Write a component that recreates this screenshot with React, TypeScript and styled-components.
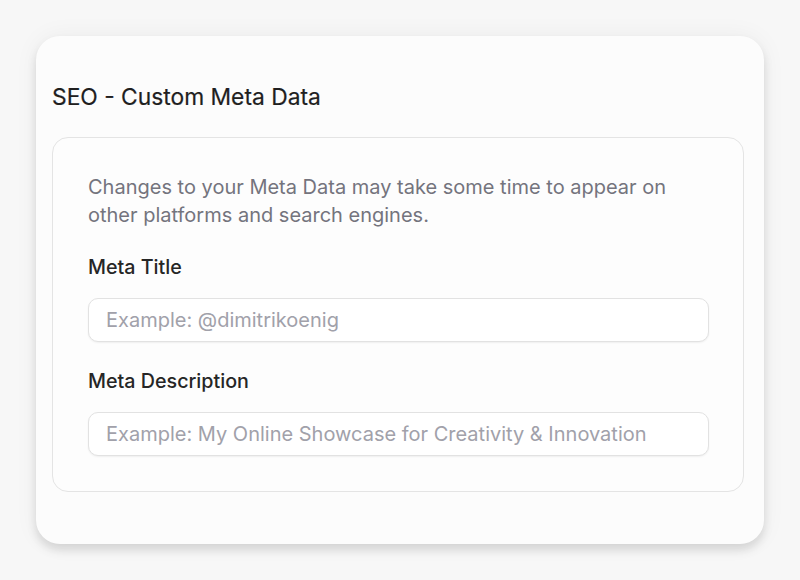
import React from 'react';
import styled, { createGlobalStyle } from 'styled-components';

const GlobalStyle = createGlobalStyle`
	html, body {
		margin: 0;
		padding: 0;
		background: #f7f7f7;
		font-family: Inter, 'Noto Sans', sans-serif;
	}
`;

export default function App() {
	return (
		<>
			<GlobalStyle />
			<Page>
				<Card>
					<Heading>SEO - Custom Meta Data</Heading>
					<Panel>
						<Note>
							Changes to your Meta Data may take some time to appear on other platforms and search engines.
						</Note>
						<Field>
							<Label htmlFor="meta-title">Meta Title</Label>
							<Input id="meta-title" placeholder="Example: @dimitrikoenig" />
						</Field>
						<Field>
							<Label htmlFor="meta-desc">Meta Description</Label>
							<Input id="meta-desc" placeholder="Example: My Online Showcase for Creativity & Innovation" />
						</Field>
					</Panel>
				</Card>
			</Page>
		</>
	);
}

const Page = styled.div`
	width: 800px;
	height: 580px;
	box-sizing: border-box;
	padding: 36px 36px 0;
`;

const Card = styled.section`
	box-sizing: border-box;
	width: 728px;
	height: 508px;
	background: #fcfcfc;
	border-radius: 24px;
	padding: 46px 20px 0 16px;
	box-shadow: 0 6px 10px rgba(0, 0, 0, 0.12), 0 0 24px rgba(0, 0, 0, 0.05);
`;

const Heading = styled.h2`
	margin: 0 0 25px;
	font-size: 22.8px;
	line-height: 30px;
	font-weight: 400;
	color: #1f1f1f;
	-webkit-text-stroke: 0.2px #1f1f1f;
`;

const Panel = styled.div`
	box-sizing: border-box;
	height: 355px;
	border: 1px solid #e4e4e4;
	border-radius: 16px;
	background: #fdfdfd;
	padding: 35px 35px 0;
	display: flex;
	flex-direction: column;
	gap: 26px;
`;

const Note = styled.p`
	margin: 0;
	font-size: 20px;
	line-height: 28px;
	color: #74747d;
	max-width: 600px;
`;

const Field = styled.div`
	display: flex;
	flex-direction: column;
	gap: 19px;

	& + & {
		margin-top: 1px;
	}
`;

const Label = styled.label`
	font-size: 19.7px;
	line-height: 24px;
	font-weight: 500;
	color: #262626;
`;

const Input = styled.input`
	box-sizing: border-box;
	width: 621px;
	height: 44px;
	border: 1px solid #e2e2e2;
	border-radius: 10px;
	background: #fff;
	padding: 0 17px;
	font-family: inherit;
	font-size: 20px;
	color: #262626;
	box-shadow: 0 1px 2px rgba(0, 0, 0, 0.06);
	outline: none;

	&::placeholder {
		color: #a1a1aa;
	}
`;
